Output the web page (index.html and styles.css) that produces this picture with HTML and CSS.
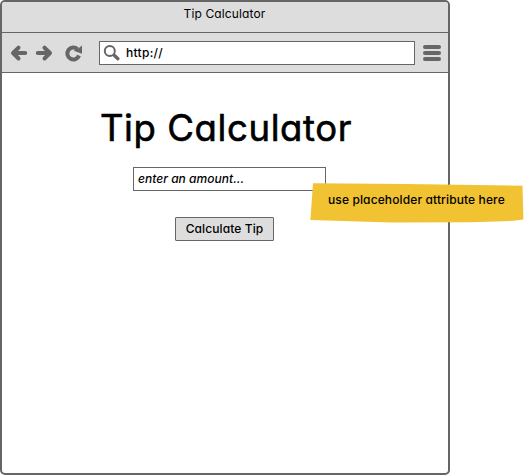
FILE: index.html
```html
<!DOCTYPE html>
<html lang="en">
<head>
<meta charset="utf-8">
<title>Tip Calculator</title>
<link rel="stylesheet" href="styles.css">
</head>
<body>
<div class="window">
  <header class="titlebar"><span class="title-text">Tip Calculator</span></header>
  <nav class="toolbar">
    <svg class="nav-icons" width="84" height="24" viewBox="0 0 84 24">
      <g fill="none" stroke="#666" stroke-width="4" stroke-linecap="round" stroke-linejoin="round">
        <path d="M16.500 6.700 11 12l5.500 5.500M12 12h11.200"/>
        <path d="M42.500 6.700 48 12l-5.500 5.500M47 12H35.800"/>
        <path stroke-linecap="butt" d="M75.500 8.200A6 6 0 1 0 77 14.500"/>
      </g>
      <path fill="#666" d="M80 4.500v8.300l-8.300-3 4.300-2z"/>
    </svg>
    <div class="address">
      <svg width="18" height="18" viewBox="0 0 18 18" fill="none" stroke="#666">
        <circle cx="6.800" cy="7" r="5" stroke-width="2"/>
        <path d="m11.500 11.500 3.400 3.200" stroke-width="3.400" stroke-linecap="round"/>
      </svg>
      <span class="url">http://</span>
    </div>
    <div class="menu"><i></i><i></i><i></i></div>
  </nav>
  <main class="page">
    <h1 class="heading">Tip Calculator</h1>
    <div class="field"><span class="hint">enter an amount...</span></div>
    <div class="button"><span class="label">Calculate Tip</span></div>
  </main>
</div>
<aside class="note">
  <svg class="note-paper" width="214" height="41" viewBox="0 0 214 41">
    <path fill="#f1c232" d="M3 .3 95 1l117.500 1.700.9 33.800-10 1.300-42 1.400-80 .3L.4 37z"/>
  </svg>
  <span class="note-text">use placeholder attribute here</span>
</aside>
</body>
</html>
```
FILE: styles.css
```css
* { box-sizing: border-box; }
body {
  margin: 0;
  background: #fff;
  color: #000;
  font: 500 12px/18px Inter, "Noto Sans", sans-serif;
  font-feature-settings: "cv11" 1;
  white-space: nowrap;
}
.window {
  width: 450px;
  height: 475px;
  border: 2px solid #666;
  border-radius: 5px;
  background: #fff;
  overflow: hidden;
}
.titlebar {
  height: 31px;
  padding: 3px 1px 0 0;
  background: #ddd;
  border-bottom: 1px solid #666;
  text-align: center;
}
.title-text { font-weight: 400; letter-spacing: .12px; }
.toolbar {
  display: flex;
  align-items: center;
  height: 40px;
  background: #ddd;
  border-bottom: 1px solid #666;
}
.nav-icons { margin-right: 13px; }
.address {
  display: flex;
  align-items: center;
  width: 316px;
  height: 24px;
  padding-left: 3px;
  background: #fff;
  border: 1px solid #666;
}
.url { margin-left: 5px; letter-spacing: .3px; }
.menu {
  display: grid;
  gap: 2px;
  width: 18px;
  margin-left: 8px;
}
.menu i { height: 4px; background: #666; border-radius: 2px; }
.page {
  display: flex;
  flex-direction: column;
  align-items: center;
}
.heading {
  margin: 30px 0 0 2px;
  height: 50px;
  font-size: 36.5px;
  line-height: 50px;
  font-weight: 400;
  letter-spacing: .6px;
  -webkit-text-stroke: .6px #000;
}
.field {
  width: 193px;
  height: 24px;
  margin: 14px 0 0 9px;
  padding: 2px 4px;
  border: 1px solid #666;
}
.hint { font-style: italic; letter-spacing: .03px; }
.button {
  width: 99px;
  height: 24px;
  margin: 26px 1px 0 0;
  padding-top: 2px;
  background: #ddd;
  border: 1px solid #666;
  border-radius: 1px;
  text-align: center;
}
.label { letter-spacing: .1px; }
.note {
  position: absolute;
  left: 310px;
  top: 183px;
  width: 214px;
  height: 41px;
  padding: 8px 0 0 18px;
}
.note-paper { position: absolute; left: 0; top: 0; }
.note-text { position: relative; letter-spacing: .12px; }
```
